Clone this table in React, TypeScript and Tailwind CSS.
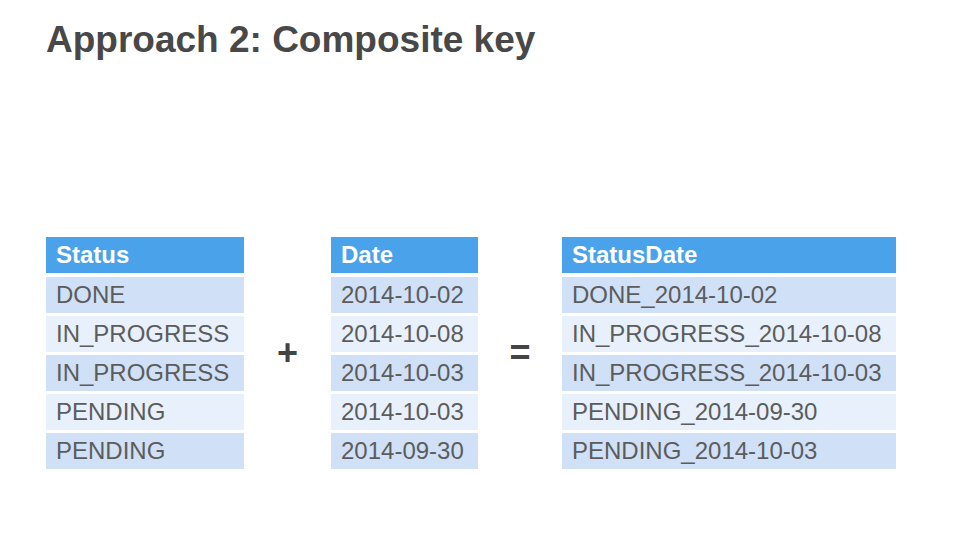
const statuses = ["DONE", "IN_PROGRESS", "IN_PROGRESS", "PENDING", "PENDING"];
const dates = ["2014-10-02", "2014-10-08", "2014-10-03", "2014-10-03", "2014-09-30"];
const combined = [
  "DONE_2014-10-02",
  "IN_PROGRESS_2014-10-08",
  "IN_PROGRESS_2014-10-03",
  "PENDING_2014-09-30",
  "PENDING_2014-10-03",
];

const KeyTable = ({ title, rows, width }: { title: string; rows: string[]; width: string }) => {
  return (
    <div className={`${width} flex flex-col`}>
      {/* header */}
      <div className="h-[36px] bg-[#4aa3ea] px-[10px] text-[24px] leading-[36px] font-bold text-white">
        {title}
      </div>
      <div className="mt-[4px] flex flex-col gap-[3px]">
        {rows.map((r, i) => (
          <div
            key={i}
            className={`h-[36px] px-[10px] text-[24px] leading-[36px] text-[#5c5c5c] ${
              i % 2 === 0 ? "bg-[#cfe0f7]" : "bg-[#e8f0fb]"
            }`}
          >
            {r}
          </div>
        ))}
      </div>
    </div>
  );
};

const Operator = ({ sign, width }: { sign: string; width: string }) => (
  <div className={`${width} text-center text-[36px] font-bold leading-none text-[#444444]`}>{sign}</div>
);

export default function App() {
  return (
    <div
      className="w-[960px] h-[540px] bg-white overflow-hidden pl-[46px] pt-[21px]"
      style={{ fontFamily: '"Liberation Sans", Arial, sans-serif' }}
    >
      <h1 className="text-[37px] leading-[37px] font-bold text-[#484848]">Approach 2: Composite key</h1>

      <div className="mt-[179px] flex items-center">
        <KeyTable title="Status" rows={statuses} width="w-[198px]" />
        <Operator sign="+" width="w-[87px]" />
        <KeyTable title="Date" rows={dates} width="w-[147px]" />
        <Operator sign="=" width="w-[84px]" />
        <KeyTable title="StatusDate" rows={combined} width="w-[334px]" />
      </div>
    </div>
  );
}
